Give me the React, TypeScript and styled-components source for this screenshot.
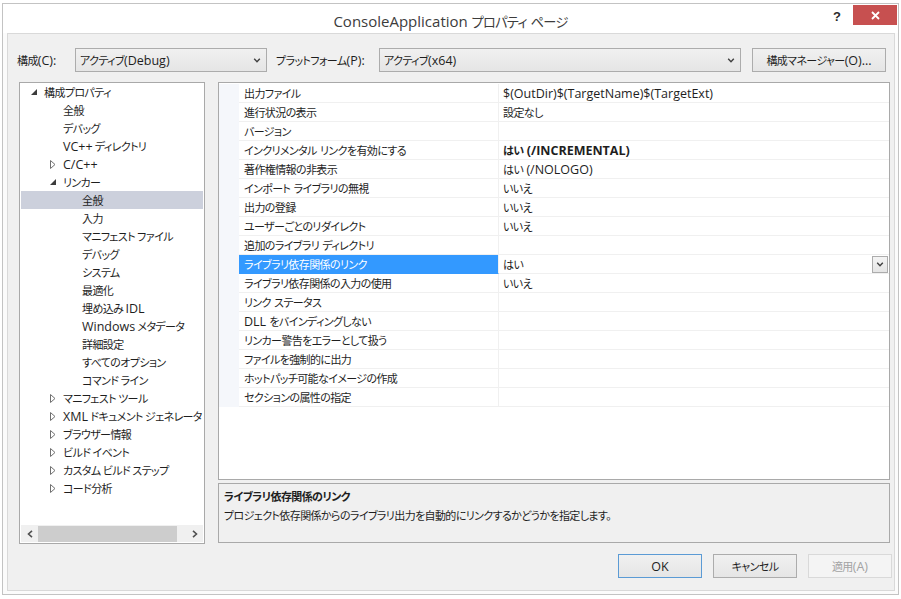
import React from 'react'
import styled, { createGlobalStyle } from 'styled-components'

const UI_FONT = '"Open Sans", "Noto Sans CJK JP", sans-serif'

const GlobalStyle = createGlobalStyle`
  html, body {
    margin: 0;
    padding: 0;
    background: #ffffff;
  }
  body {
    font-family: ${UI_FONT};
    font-size: 12.5px;
    font-feature-settings: "palt";
    color: #1e1e1e;
  }
`

// Japanese runs are set a bit smaller and tighter, like Meiryo UI
const Jp = styled.span`
  font-family: "Noto Sans CJK JP", sans-serif;
  font-size: 0.88em;
  letter-spacing: -0.055em;
`

const CJK_RE = /([\u3000-\u30ff\u4e00-\u9fff\uff00-\uffef]+)/

function T({ children }: { children: string }) {
  const parts = children.split(CJK_RE)
  return <span>{parts.map((p, i) => (i % 2 === 1 ? <Jp key={i}>{p}</Jp> : p))}</span>
}

const Window = styled.div`
  box-sizing: border-box;
  margin: 3px 0 0 2px;
  width: 897px;
  height: 592px;
  border: 1px solid #c3c3c3;
  background: #fbfbfb;
  display: flex;
  flex-direction: column;
  padding: 0 3px 3px 4px;
`

const TitleBar = styled.div`
  height: 29px;
  display: grid;
  grid-template-columns: 1fr auto 1fr;
  align-items: start;
  background: #ffffff;
  margin: 0 -3px 0 -4px;
`

const Title = styled.div`
  grid-column: 2;
  padding-top: 7px;
  font-size: 15px;
  color: #3c3c3c;
`

const Caption = styled.div`
  grid-column: 3;
  justify-self: end;
  display: flex;
  align-items: flex-start;
`

const HelpGlyph = styled.span`
  font-family: "Liberation Sans", sans-serif;
  font-weight: bold;
  font-size: 13px;
  color: #2b2b2b;
  margin: 5px 12px 0 0;
`

const CloseButton = styled.div`
  width: 44px;
  height: 20px;
  margin: 1px 1px 0 0;
  background: #c75050;
  display: flex;
  align-items: center;
  justify-content: center;
`

const Client = styled.div`
  flex: 1;
  border: 1px solid #d9d9d9;
  background: #f0f0f0;
  display: flex;
  flex-direction: column;
  padding: 14px 0 0 9px;
`

const Toolbar = styled.div`
  display: flex;
  align-items: center;
  height: 24px;
`

const Label = styled.span<{ w: number; indent?: number }>`
  box-sizing: border-box;
  width: ${({ w }) => w}px;
  padding-left: ${({ indent }) => indent ?? 0}px;
  white-space: nowrap;
`

const Combo = styled.div<{ w: number }>`
  box-sizing: border-box;
  width: ${({ w }) => w}px;
  height: 24px;
  border: 1px solid #acacac;
  background: linear-gradient(#f0f0f0, #e5e5e5);
  display: flex;
  align-items: center;
  justify-content: space-between;
  padding: 0 5px 0 4px;
  white-space: nowrap;
`

const PushButton = styled.div<{ w: number; variant?: 'default' | 'disabled' }>`
  box-sizing: border-box;
  width: ${({ w }) => w}px;
  height: 24px;
  display: flex;
  align-items: center;
  justify-content: center;
  border: 1px solid
    ${({ variant }) => (variant === 'default' ? '#5b9bd5' : variant === 'disabled' ? '#d9d9d9' : '#acacac')};
  background: ${({ variant }) => (variant === 'disabled' ? '#f4f4f4' : 'linear-gradient(#f0f0f0, #e5e5e5)')};
  color: ${({ variant }) => (variant === 'disabled' ? '#a3a3a3' : '#1e1e1e')};
  white-space: nowrap;
`

const ManagerButton = styled(PushButton)`
  margin-left: 11px;
`

const Main = styled.div`
  display: flex;
  margin-top: 10px;
  margin-left: 2px;
`

const TreePanel = styled.div`
  box-sizing: border-box;
  width: 186px;
  height: 462px;
  border: 1px solid #a9a9a9;
  background: #ffffff;
  display: flex;
  flex-direction: column;
  padding: 0 1px 1px 1px;
`

const TreeList = styled.div`
  flex: 1;
`

const TreeRow = styled.div<{ level: number; selected?: boolean }>`
  height: 18px;
  display: flex;
  align-items: center;
  padding-left: ${({ level }) => 10 + level * 19}px;
  background: ${({ selected }) => (selected ? '#ccd0dc' : 'transparent')};
  white-space: nowrap;
  word-spacing: -1px;
  overflow: hidden;
`

const Expander = styled.span`
  flex-shrink: 0;
  width: 13px;
  display: inline-flex;
  align-items: center;
`

const HScroll = styled.div`
  height: 17px;
  display: flex;
  align-items: center;
  background: #f0f0f0;
`

const ScrollArrow = styled.div`
  width: 17px;
  height: 17px;
  display: flex;
  align-items: center;
  justify-content: center;
`

const ScrollTrack = styled.div`
  flex: 1;
  display: flex;
`

const ScrollThumb = styled.div`
  width: 139px;
  height: 16px;
  background: #cdcdcd;
`

const RightColumn = styled.div`
  margin-left: 13px;
  display: flex;
  flex-direction: column;
`

const Grid = styled.div`
  box-sizing: border-box;
  width: 672px;
  height: 398px;
  border: 1px solid #a9a9a9;
  background: #ffffff;
  padding-top: 1px;
`

const PropRow = styled.div`
  display: grid;
  grid-template-columns: 20px 260px 1fr;
  height: 19px;
`

const Gutter = styled.div`
  background: #f5f7fb;
`

const NameCell = styled.div<{ selected?: boolean }>`
  box-sizing: border-box;
  display: flex;
  align-items: center;
  padding-left: 5px;
  background: ${({ selected }) => (selected ? '#3399ff' : '#ffffff')};
  color: ${({ selected }) => (selected ? '#ffffff' : '#1e1e1e')};
  border-bottom: 1px solid ${({ selected }) => (selected ? '#3399ff' : '#f0f0f0')};
  border-right: 1px solid #f0f0f0;
  white-space: nowrap;
`

const ValueCell = styled.div<{ bold?: boolean }>`
  box-sizing: border-box;
  display: flex;
  align-items: center;
  justify-content: space-between;
  padding-left: 4px;
  padding-right: 1px;
  border-bottom: 1px solid #f0f0f0;
  font-weight: ${({ bold }) => (bold ? 700 : 400)};
  white-space: nowrap;
`

const DropButton = styled.div`
  box-sizing: border-box;
  width: 16px;
  height: 17px;
  border: 1px solid #acacac;
  background: linear-gradient(#f4f4f4, #e5e5e5);
  display: flex;
  align-items: center;
  justify-content: center;
`

const Description = styled.div`
  box-sizing: border-box;
  margin-top: 3px;
  width: 672px;
  height: 60px;
  border: 1px solid #a9a9a9;
  background: #f0f0f0;
  padding: 3px 5px;
  line-height: 18px;
`

const DescTitle = styled.div`
  font-weight: 700;
`

const Footer = styled.div`
  display: flex;
  justify-content: flex-end;
  gap: 11px;
  margin-top: 10px;
  padding-right: 2px;
`

const Chevron = () => (
  <svg width="8" height="5" viewBox="0 0 8 5">
    <path d="M1.2 0.8 L4 3.8 L6.8 0.8" fill="none" stroke="#404040" strokeWidth="1.4" />
  </svg>
)

const OpenArrow = () => (
  <svg width="6" height="6" viewBox="0 0 6 6">
    <path d="M6 0 L6 6 L0 6 Z" fill="#3c3c3c" />
  </svg>
)

const ClosedArrow = () => (
  <svg width="6" height="9" viewBox="0 0 6 9">
    <path d="M0.5 0.5 L5 4.5 L0.5 8.5 Z" fill="none" stroke="#707070" strokeWidth="1" />
  </svg>
)

const ScrollChevron = ({ dir }: { dir: 'left' | 'right' }) => (
  <svg width="6" height="8" viewBox="0 0 6 8">
    <path
      d={dir === 'left' ? 'M5 0.8 L1.5 4 L5 7.2' : 'M1 0.8 L4.5 4 L1 7.2'}
      fill="none"
      stroke="#505050"
      strokeWidth="1.6"
    />
  </svg>
)

type TreeItem = { label: string; level: number; arrow?: 'open' | 'closed'; selected?: boolean }

const TREE: TreeItem[] = [
  { label: '構成プロパティ', level: 0, arrow: 'open' },
  { label: '全般', level: 1 },
  { label: 'デバッグ', level: 1 },
  { label: 'VC++ ディレクトリ', level: 1 },
  { label: 'C/C++', level: 1, arrow: 'closed' },
  { label: 'リンカー', level: 1, arrow: 'open' },
  { label: '全般', level: 2, selected: true },
  { label: '入力', level: 2 },
  { label: 'マニフェスト ファイル', level: 2 },
  { label: 'デバッグ', level: 2 },
  { label: 'システム', level: 2 },
  { label: '最適化', level: 2 },
  { label: '埋め込み IDL', level: 2 },
  { label: 'Windows メタデータ', level: 2 },
  { label: '詳細設定', level: 2 },
  { label: 'すべてのオプション', level: 2 },
  { label: 'コマンド ライン', level: 2 },
  { label: 'マニフェスト ツール', level: 1, arrow: 'closed' },
  { label: 'XML ドキュメント ジェネレータ', level: 1, arrow: 'closed' },
  { label: 'ブラウザー情報', level: 1, arrow: 'closed' },
  { label: 'ビルド イベント', level: 1, arrow: 'closed' },
  { label: 'カスタム ビルド ステップ', level: 1, arrow: 'closed' },
  { label: 'コード分析', level: 1, arrow: 'closed' },
]

type Prop = { name: string; value?: string; bold?: boolean; selected?: boolean }

const PROPS: Prop[] = [
  { name: '出力ファイル', value: '$(OutDir)$(TargetName)$(TargetExt)' },
  { name: '進行状況の表示', value: '設定なし' },
  { name: 'バージョン' },
  { name: 'インクリメンタル リンクを有効にする', value: 'はい (/INCREMENTAL)', bold: true },
  { name: '著作権情報の非表示', value: 'はい (/NOLOGO)' },
  { name: 'インポート ライブラリの無視', value: 'いいえ' },
  { name: '出力の登録', value: 'いいえ' },
  { name: 'ユーザーごとのリダイレクト', value: 'いいえ' },
  { name: '追加のライブラリ ディレクトリ' },
  { name: 'ライブラリ依存関係のリンク', value: 'はい', selected: true },
  { name: 'ライブラリ依存関係の入力の使用', value: 'いいえ' },
  { name: 'リンク ステータス' },
  { name: 'DLL をバインディングしない' },
  { name: 'リンカー警告をエラーとして扱う' },
  { name: 'ファイルを強制的に出力' },
  { name: 'ホットパッチ可能なイメージの作成' },
  { name: 'セクションの属性の指定' },
]

export default function App() {
  return (
    <>
      <GlobalStyle />
      <Window>
        <TitleBar>
          <Title>
            <T>ConsoleApplication プロパティ ページ</T>
          </Title>
          <Caption>
            <HelpGlyph>?</HelpGlyph>
            <CloseButton>
              <svg width="9" height="9" viewBox="0 0 9 9">
                <path d="M1 1 L8 8 M8 1 L1 8" stroke="#ffffff" strokeWidth="1.8" />
              </svg>
            </CloseButton>
          </Caption>
        </TitleBar>
        <Client>
          <Toolbar>
            <Label w={58}>
              <T>構成(C):</T>
            </Label>
            <Combo w={192}>
              <T>アクティブ(Debug)</T>
              <Chevron />
            </Combo>
            <Label w={112} indent={9}>
              <T>プラットフォーム(P):</T>
            </Label>
            <Combo w={362}>
              <T>アクティブ(x64)</T>
              <Chevron />
            </Combo>
            <ManagerButton w={134}>
              <T>構成マネージャー(O)...</T>
            </ManagerButton>
          </Toolbar>
          <Main>
            <TreePanel>
              <TreeList>
                {TREE.map((item, i) => (
                  <TreeRow key={i} level={item.level} selected={item.selected}>
                    <Expander>
                      {item.arrow === 'open' && <OpenArrow />}
                      {item.arrow === 'closed' && <ClosedArrow />}
                    </Expander>
                    <T>{item.label}</T>
                  </TreeRow>
                ))}
              </TreeList>
              <HScroll>
                <ScrollArrow>
                  <ScrollChevron dir="left" />
                </ScrollArrow>
                <ScrollTrack>
                  <ScrollThumb />
                </ScrollTrack>
                <ScrollArrow>
                  <ScrollChevron dir="right" />
                </ScrollArrow>
              </HScroll>
            </TreePanel>
            <RightColumn>
              <Grid>
                {PROPS.map((p, i) => (
                  <PropRow key={i}>
                    <Gutter />
                    <NameCell selected={p.selected}>
                      <T>{p.name}</T>
                    </NameCell>
                    <ValueCell bold={p.bold}>
                      <T>{p.value ?? ''}</T>
                      {p.selected && (
                        <DropButton>
                          <Chevron />
                        </DropButton>
                      )}
                    </ValueCell>
                  </PropRow>
                ))}
              </Grid>
              <Description>
                <DescTitle>
                  <T>ライブラリ依存関係のリンク</T>
                </DescTitle>
                <div>
                  <T>プロジェクト依存関係からのライブラリ出力を自動的にリンクするかどうかを指定します。</T>
                </div>
              </Description>
            </RightColumn>
          </Main>
          <Footer>
            <PushButton w={84} variant="default">
              OK
            </PushButton>
            <PushButton w={84}>
              <T>キャンセル</T>
            </PushButton>
            <PushButton w={84} variant="disabled">
              <T>適用(A)</T>
            </PushButton>
          </Footer>
        </Client>
      </Window>
    </>
  )
}
